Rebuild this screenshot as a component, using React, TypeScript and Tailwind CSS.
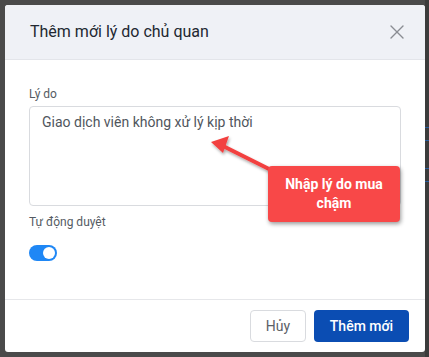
import { X } from 'lucide-react';

export default function App() {
  return (
    <div
      className="w-[429px] h-[357px] bg-[#4a4a4a] flex overflow-hidden"
      style={{ fontFamily: 'Roboto, "Noto Sans", sans-serif' }}
    >
      <div className="relative shrink-0 mt-[5px] ml-[5px] w-[420px] h-[347px] bg-white rounded-[3px] flex flex-col overflow-hidden">
        <header className="h-[55px] bg-[#eff1f6] border-b border-[#e3e5ea] flex items-center justify-between pl-[25px] pr-[16px]">
          <h1 className="text-[16px] text-[#222831]">Thêm mới lý do chủ quan</h1>
          <X className="w-6 h-6 text-[#8a8d93]" strokeWidth={1.4} />
        </header>

        <main className="flex-1 px-6 pt-[26px]">
          <label className="block text-[12px] text-[#555b63] leading-4">Lý do</label>
          <div className="mt-[4px] h-[100px] border border-[#d9dbdf] rounded-[4px] px-[12px] pt-[5px] text-[14px] text-[#50565d]">
            Giao dịch viên không xử lý kịp thời
          </div>
          <label className="block mt-[8px] text-[12px] text-[#555b63] leading-4">Tự động duyệt</label>
          <div className="mt-[15px] w-[28px] h-[16px] rounded-full bg-[#1f87f5] flex items-center justify-end pr-[2px]">
            <div className="w-[12px] h-[12px] rounded-full bg-white" />
          </div>
        </main>

        <footer className="h-[53px] border-t border-[#e6e7ea] flex items-center justify-end gap-[8px] pr-[16px]">
          <button className="w-[56px] h-[32px] border border-[#d9dbdf] rounded-[4px] text-[14px] text-[#5b6168] bg-white">
            Hủy
          </button>
          <button className="w-[95px] h-[32px] rounded-[4px] text-[14px] font-medium text-white bg-[#0b4db3]">
            Thêm mới
          </button>
        </footer>

        <svg className="absolute left-0 top-0 pointer-events-none" width="420" height="347">
          <defs>
            <filter id="sh" x="-20%" y="-20%" width="140%" height="160%">
              <feDropShadow dx="1" dy="2" stdDeviation="1.5" floodColor="#000" floodOpacity="0.35" />
            </filter>
          </defs>
          <g filter="url(#sh)">
            <line x1="216" y1="140" x2="268" y2="166" stroke="#f2403f" strokeWidth="4" strokeLinecap="round" />
            <polygon points="206,137 224,131 218,148" fill="#f2403f" />
          </g>
        </svg>
        <div className="absolute left-[263px] top-[161px] w-[132px] h-[56px] bg-[#f84848] rounded-[4px] shadow-[1px_2px_4px_rgba(0,0,0,0.4)] flex items-center justify-center text-center text-white font-bold text-[14px] leading-[19px] px-2">
          Nhập lý do mua chậm
        </div>
      </div>
      <div className="shrink-0 w-[4px] h-full bg-[#3b3b3b] flex flex-col">
        <div className="mt-[127px] h-px bg-[#2a5b9a]" />
        <div className="mt-[12px] h-px bg-[#2a5b9a]" />
        <div className="mt-[27px] h-px bg-[#2a5b9a]" />
        <div className="mt-[12px] h-px bg-[#2a5b9a]" />
      </div>
    </div>
  );
}
